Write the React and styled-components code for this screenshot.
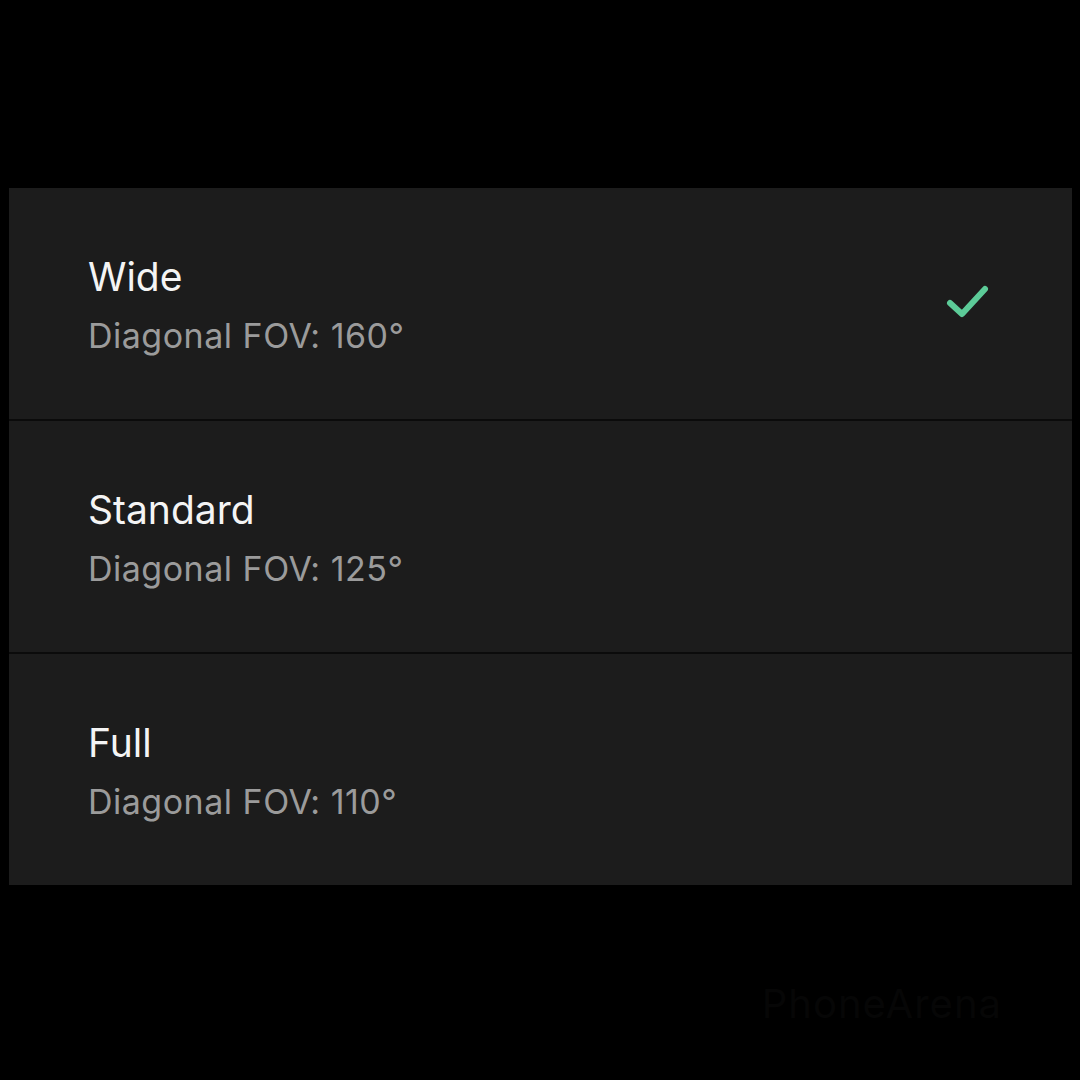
import React from "react";
import styled, { createGlobalStyle } from "styled-components";

const Global = createGlobalStyle`
  html, body { margin: 0; padding: 0; background: #000; }
  body { font-family: Inter, "Noto Sans", sans-serif; }
`;

const Page = styled.div`
  width: 1080px;
  height: 1080px;
  background: #000;
  display: flex;
  flex-direction: column;
  padding: 188px 8px 0 9px;
  box-sizing: border-box;
  position: relative;
  overflow: hidden;
`;

const List = styled.div`
  display: flex;
  flex-direction: column;
  gap: 2px;
  background: #0b0b0b;
`;

const Row = styled.div`
  height: 231px;
  background: #1c1c1c;
  display: flex;
  align-items: center;
  justify-content: space-between;
  padding: 0 78px 0 79px;
  box-sizing: border-box;
`;

const Texts = styled.div`
  display: flex;
  flex-direction: column;
  gap: 16px;
  padding-top: 2px;
`;

const Title = styled.div`
  color: #f4f4f4;
  font-size: 39px;
  line-height: 46px;
  font-weight: 400;
`;

const Sub = styled.div`
  color: #9b9b9b;
  font-size: 34px;
  line-height: 40px;
  font-weight: 400;
  letter-spacing: 0.5px;
`;

const Check = styled.svg`
  width: 50px;
  height: 44px;
  margin-top: -4px;
`;

const Watermark = styled.div`
  position: absolute;
  right: 78px;
  bottom: 52px;
  color: #060606;
  font-size: 40px;
  font-weight: 400;
  letter-spacing: 1px;
`;

const items = [
  { title: "Wide", fov: "160°", selected: true },
  { title: "Standard", fov: "125°" },
  { title: "Full", fov: "110°" },
];

export default function App() {
  return (
    <>
      <Global />
      <Page>
        <List>
          {items.map((it) => (
            <Row key={it.title}>
              <Texts>
                <Title>{it.title}</Title>
                <Sub>Diagonal FOV: {it.fov}</Sub>
              </Texts>
              {it.selected && (
                <Check viewBox="0 0 50 44">
                  <path
                    d="M6 23 L18 34 L41 9"
                    fill="none"
                    stroke="#5ccb98"
                    strokeWidth="6"
                    strokeLinecap="round"
                    strokeLinejoin="round"
                  />
                </Check>
              )}
            </Row>
          ))}
        </List>
        <Watermark>PhoneArena</Watermark>
      </Page>
    </>
  );
}
